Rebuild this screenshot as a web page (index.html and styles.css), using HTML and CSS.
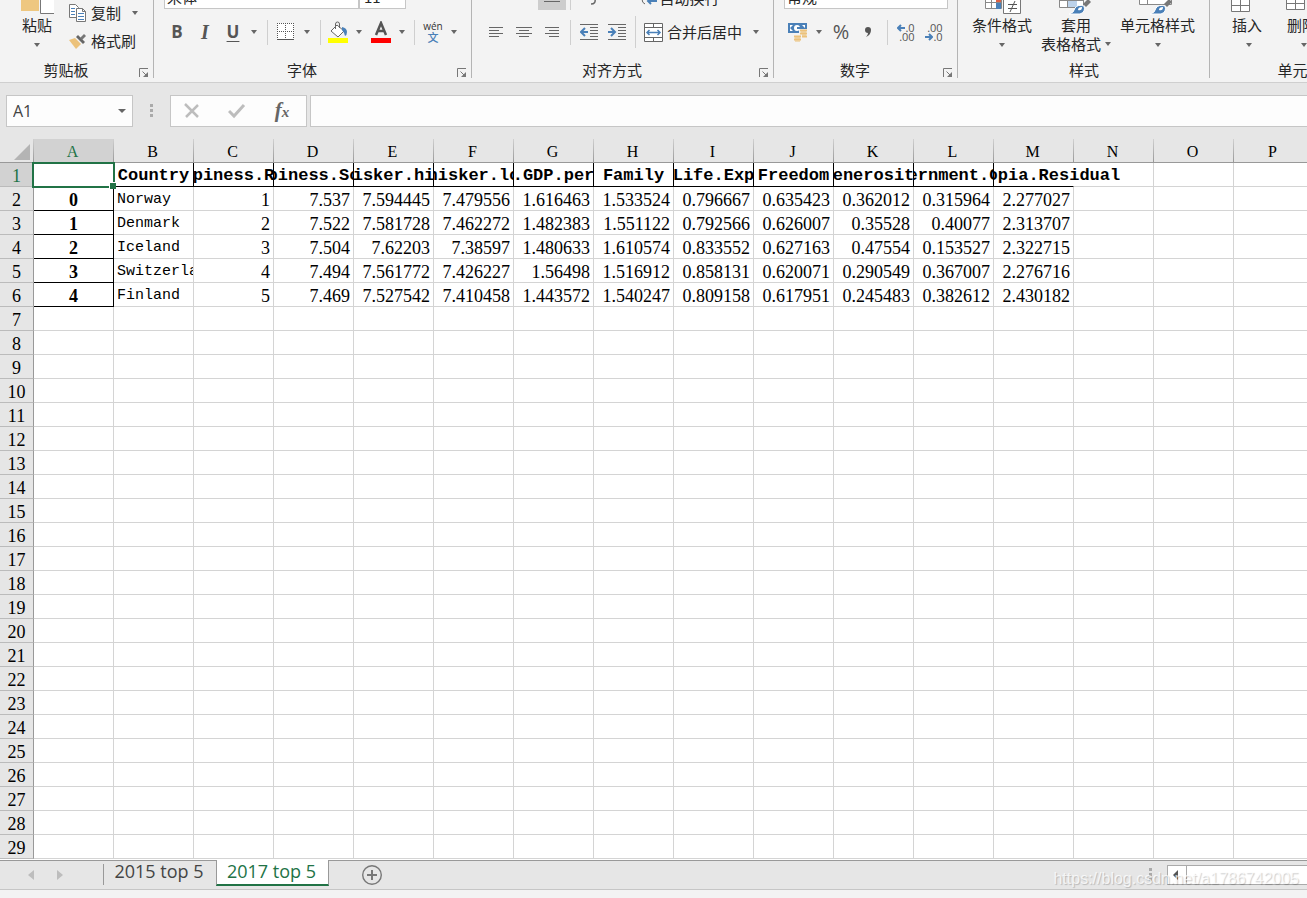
FILE: index.html
```html
<!DOCTYPE html>
<html lang="zh-CN">
<head>
<meta charset="utf-8">
<title>2017 top 5</title>
<link rel="stylesheet" href="styles.css">
</head>
<body>
<header class="ribbon">
  <section class="group clipboard">
    <div class="body row">
      <button class="big paste">
        <svg width="34" height="20" viewBox="0 0 34 20"><path d="M1 0h18v16H1z" fill="#eec780"/><path d="M20.500 0v18.500h14V0" fill="#fff" stroke="#777"/></svg>
        <span>粘贴</span><i class="caret"></i>
      </button>
      <div class="stack">
        <button class="line">
          <svg width="18" height="20" viewBox="0 0 18 20"><g fill="#fff" stroke="#777"><path d="M.5 1.500h6l3 3v10h-9z"/><path d="M7.500 5.500h6l3 3v10h-9z"/><path d="M13.500 5.500v3h3" fill="none"/></g><path d="M2 5.500h4M2 8.500h4M2 11.500h4M9 10.500h6M9 13.500h6M9 16.500h6" stroke="#4a80b8"/></svg>
          <span>复制</span><i class="caret"></i>
        </button>
        <button class="line">
          <svg width="18" height="18" viewBox="0 0 18 18"><path d="M0 8l6-2 6 6-5 5z" fill="#ecc27b"/><path d="M7 5l2-2 7 7-2 2z" fill="#666"/><path d="M11 6l4-4 2 2-4 4z" fill="#777"/></svg>
          <span>格式刷</span>
        </button>
      </div>
    </div>
    <div class="label">剪贴板</div><svg class="launch" width="10" height="10" viewBox="0 0 10 10"><path d="M.5 9V.5H9M3.500 3.500l4 4" fill="none" stroke="#777"/><path d="M9 4v5H4z" fill="#777"/></svg>
  </section>

  <section class="group font">
    <div class="body column">
      <div class="top">
        <select class="combo name" aria-label="字体"><option>宋体</option></select><select class="combo" aria-label="字号"><option>11</option></select>
      </div>
      <div class="tools">
        <button class="bold" aria-label="加粗">B</button>
        <button class="italic" aria-label="倾斜">I</button>
        <button class="under" aria-label="下划线">U</button>
        <i class="caret"></i><i class="sep"></i>
        <button aria-label="边框"><svg width="18" height="18" viewBox="0 0 18 18"><path d="M0 0h17v17H0z" fill="#fff"/><path d="M0 .5h17M0 8.500h17M.5 0v16M8.500 0v16M16.500 0v16" fill="none" stroke="#555" stroke-dasharray="1 1"/><path d="M0 16.500h17" stroke="#555"/></svg></button>
        <i class="caret"></i><i class="sep"></i>
        <button aria-label="填充颜色"><svg width="20" height="22" viewBox="0 0 20 22"><path d="M9 4l7 6-6 6-7-6z" fill="#fff" stroke="#666"/><path d="M7.500 8V3q0-2 2-2t2 2v4" fill="none" stroke="#666"/><path d="M14 6q5 1 5 5 0 3-2 4-1-4-3-6z" fill="#4a80b8"/><path d="M0 17h20v5H0z" fill="#ff0"/></svg></button>
        <i class="caret"></i>
        <button aria-label="字体颜色"><svg width="20" height="22" viewBox="0 0 20 22"><path d="M5 14L10 2l5 12M7 10h6" fill="none" stroke="#555" stroke-width="2.500"/><path d="M0 17h20v5H0z" fill="red"/></svg></button>
        <i class="caret"></i><i class="sep"></i>
        <button class="pinyin" aria-label="拼音"><small>wén</small><b>文</b></button>
        <i class="caret"></i>
      </div>
    </div>
    <div class="label">字体</div><svg class="launch" width="10" height="10" viewBox="0 0 10 10"><path d="M.5 9V.5H9M3.500 3.500l4 4" fill="none" stroke="#777"/><path d="M9 4v5H4z" fill="#777"/></svg>
  </section>

  <section class="group align">
    <div class="body column">
      <div class="top">
        <button class="pressed" aria-label="垂直居中"><svg width="18" height="18" viewBox="0 0 18 18"><path d="M1 5.500h16M4 9.500h10M1 12.500h16" stroke="#666"/></svg></button>
        <i class="sep"></i>
        <button aria-label="方向"><svg width="18" height="18" viewBox="0 0 18 18"><path d="M8 15q5 0 4-5" fill="none" stroke="#666" stroke-width="1.500"/></svg></button>
        <i></i>
        <button class="wrap"><svg width="19" height="20" viewBox="0 0 19 20"><path d="M7 16q-3-1-3-5" fill="none" stroke="#666"/><path d="M18 8v5h-8m3-3l-3 3 3 3" fill="none" stroke="#4a80b8" stroke-width="2"/></svg><span>自动换行</span></button>
      </div>
      <div class="tools">
        <button aria-label="左对齐"><svg width="16" height="12" viewBox="0 0 16 12"><path d="M1 1.500h14M1 4.500h10M1 7.500h14M1 10.500h10" stroke="#666"/></svg></button>
        <button aria-label="居中"><svg width="16" height="12" viewBox="0 0 16 12"><path d="M0 1.500h16M3 4.500h10M0 7.500h16M3 10.500h10" stroke="#666"/></svg></button>
        <button aria-label="右对齐"><svg width="16" height="12" viewBox="0 0 16 12"><path d="M1 1.500h14M5 4.500h10M1 7.500h14M5 10.500h10" stroke="#666"/></svg></button>
        <i class="sep"></i>
        <button aria-label="减少缩进"><svg width="18" height="18" viewBox="0 0 18 18"><path d="M0 1.500h18M10 4.500h8M10 7.500h8M10 10.500h8M10 13.500h8M0 16.500h18" stroke="#666"/><path d="M8 9H2m3-4L1 9l4 4" fill="none" stroke="#4a80b8" stroke-width="2"/></svg></button>
        <button aria-label="增加缩进"><svg width="18" height="18" viewBox="0 0 18 18"><path d="M0 1.500h18M10 4.500h8M10 7.500h8M10 10.500h8M10 13.500h8M0 16.500h18" stroke="#666"/><path d="M0 9h6M3 5l4 4-4 4" fill="none" stroke="#4a80b8" stroke-width="2"/></svg></button>
        <i class="sep long"></i>
        <button class="merge"><svg width="19" height="19" viewBox="0 0 19 19"><path d="M.5.500h18v18H.5zM.5 4.500h18M.5 14.500h18M9.500.5v4M9.500 14.500v4" fill="#fff" stroke="#666"/><path d="M3 9.500h13M5.500 7L3 9.500 5.500 12M13.500 7L16 9.500 13.500 12" fill="none" stroke="#4a80b8" stroke-width="1.500"/></svg><span>合并后居中</span></button>
        <i class="caret"></i>
      </div>
    </div>
    <div class="label">对齐方式</div><svg class="launch" width="10" height="10" viewBox="0 0 10 10"><path d="M.5 9V.5H9M3.500 3.500l4 4" fill="none" stroke="#777"/><path d="M9 4v5H4z" fill="#777"/></svg>
  </section>

  <section class="group number">
    <div class="body column">
      <div class="top">
        <select class="combo" aria-label="数字格式"><option>常规</option></select>
      </div>
      <div class="tools">
        <button aria-label="会计数字格式"><svg width="20" height="20" viewBox="0 0 20 20"><path d="M0 1h19v10H0z" fill="#4a80b8"/><path d="M2 3h3L2 6zM17 3h-3l3 3zM2 9h3L2 6z" fill="#fff"/><circle cx="9" cy="6" r="3" fill="#fff"/><path d="M9 5h3v2H9z" fill="#4a80b8"/><path d="M11 7h9v12H5v-7h6z" fill="#f3f3f3"/><path d="M12 8.500h7M12 11.500h7M14 14.500h5M6 14.500h7M6 17.500h7" stroke="#ecc27b" stroke-width="2"/><path d="M13 10h5M14 13h4M7 16h5M7 19h5" stroke="#ecc27b"/></svg></button>
        <i class="caret"></i>
        <button class="percent" aria-label="百分比">%</button>
        <button aria-label="千位分隔"><svg width="8" height="12" viewBox="0 0 8 12"><path d="M1 4a3 3 0 1 1 6 0q0 5-5 7 2-2 2-4-3 0-3-3z" fill="#555"/></svg></button>
        <i class="sep"></i>
        <button class="dec" aria-label="增加小数位"><span><svg width="8" height="8" viewBox="0 0 8 8"><path d="M8 4H2m2-3L1 4l3 3" fill="none" stroke="#4a80b8" stroke-width="2"/></svg>.0</span><span>.00</span></button>
        <button class="dec" aria-label="减少小数位"><span>.00</span><span><svg width="8" height="8" viewBox="0 0 8 8"><path d="M0 4h6M4 1l3 3-3 3" fill="none" stroke="#4a80b8" stroke-width="2"/></svg>.0</span></button>
      </div>
    </div>
    <div class="label">数字</div><svg class="launch" width="10" height="10" viewBox="0 0 10 10"><path d="M.5 9V.5H9M3.500 3.500l4 4" fill="none" stroke="#777"/><path d="M9 4v5H4z" fill="#777"/></svg>
  </section>

  <section class="group styles">
    <div class="body row">
      <button class="big">
        <svg width="38" height="20" viewBox="0 0 38 20"><path d="M2.500 0v13.500h16V0M2.500 7.500h16M8.500 0v13" fill="#fff" stroke="#888"/><path d="M13 0h5v7h-5z" fill="#dc6046"/><path d="M13 8h5v6h-5z" fill="#4a80b8"/><path d="M20.500 0v18.500h17V0" fill="#fff" stroke="#777"/><path d="M25 9.500h9M25 13.500h9M32 6l-5 11" stroke="#555"/></svg>
        <span>条件格式</span><i class="caret"></i>
      </button>
      <button class="big">
        <svg width="34" height="20" viewBox="0 0 34 20"><path d="M.5 0v12.500h24V0M.5 5.500h24M8.500 0v12" fill="#fff" stroke="#888"/><path d="M9 6h9v6H9z" fill="#bcd2ea"/><path d="M10 19q5-1 6-6 3-4 9-2 2 6-4 8z" fill="#4a80b8" stroke="#fff"/><path d="M24 9l5-5 3 3-5 5z" fill="#777"/><path d="M19 15q0-3 4-3 0 4-4 3z" fill="#fff"/></svg>
        <span>套用</span><span class="second">表格格式<i class="caret"></i></span>
      </button>
      <button class="big">
        <svg width="38" height="20" viewBox="0 0 38 20"><path d="M.5 0v9.500h32V0M8.500 0v9" fill="#fff" stroke="#888"/><path d="M11 19q5-1 6-6 3-4 9-2 2 6-4 8z" fill="#4a80b8" stroke="#fff"/><path d="M25 9l5-5 3 3-5 5z" fill="#777"/><path d="M20 15q0-3 4-3 0 4-4 3z" fill="#fff"/></svg>
        <span>单元格样式</span><i class="caret"></i>
      </button>
    </div>
    <div class="label">样式</div>
  </section>

  <section class="group cells">
    <div class="body row">
      <button class="big"><svg width="32" height="20" viewBox="0 0 32 20"><path d="M.5 0v16.500h18V0M.5 10.500h18M9.500 0v16" fill="#fff" stroke="#777"/></svg><span>插入</span><i class="caret"></i></button>
      <button class="big"><svg width="32" height="20" viewBox="0 0 32 20"><path d="M.5 0v14.500h18V0M.5 8.500h18M9.500 0v14" fill="#fff" stroke="#777"/></svg><span>删除</span><i class="caret"></i></button>
    </div>
    <div class="label">单元格</div>
  </section>
</header>

<div class="formula-bar">
  <div class="name-box"><input type="text" value="A1" aria-label="名称框"><i class="caret"></i></div>
  <i class="grip"></i>
  <div class="actions">
    <button aria-label="取消"><svg width="16" height="16" viewBox="0 0 16 16"><path d="M1 1l13 13M14 2L2 14" stroke="#bdbdbd" stroke-width="2.500" fill="none"/></svg></button>
    <button aria-label="输入"><svg width="18" height="16" viewBox="0 0 18 16"><path d="M1 8l5 5L16 2" stroke="#bdbdbd" stroke-width="3" fill="none"/></svg></button>
    <button class="fx" aria-label="插入函数"><i>f</i><small>x</small></button>
  </div>
  <input class="formula" type="text" aria-label="编辑栏">
</div>

<main class="sheet">
  <table>
    <thead><tr id="letters"><th class="corner" aria-label="全选"><svg width="16" height="16" viewBox="0 0 16 16"><path d="M16 0v16H0z" fill="#b4b4b4"/></svg></th></tr></thead>
    <tbody id="rows"></tbody>
  </table>
</main>

<footer class="tabs">
  <button class="nav" aria-label="上一张"><svg width="6" height="10" viewBox="0 0 6 10"><path d="M6 0v10L0 5z" fill="#bdbdbd"/></svg></button>
  <button class="nav" aria-label="下一张"><svg width="6" height="10" viewBox="0 0 6 10"><path d="M0 0v10l6-5z" fill="#bdbdbd"/></svg></button>
  <i class="divider"></i>
  <button class="tab">2015 top 5</button>
  <button class="tab active">2017 top 5</button>
  <button class="add" aria-label="新工作表"><svg width="20" height="20" viewBox="0 0 20 20"><circle cx="10" cy="10" r="9.300" fill="none" stroke="#777" stroke-width="1.400"/><path d="M10 5v10M5 10h10" stroke="#777" stroke-width="2"/></svg></button>
  <i class="grip"></i>
  <div class="scroll"><button aria-label="向左滚动"><svg width="5" height="10" viewBox="0 0 5 10"><path d="M5 0v10L0 5z" fill="#555"/></svg></button></div>
  <span class="watermark">https://blog.csdn.net/a1786742005</span>
</footer>
<div class="status"></div>
<script src="sheet.js"></script>
</body>
</html>
```
FILE: styles.css
```css
* { box-sizing: border-box; }
body {
  margin: 0;
  height: 100vh;
  display: flex;
  flex-direction: column;
  overflow: hidden;
  background: #e6e6e6;
  color: #262626;
  font: 15px/20px "Open Sans", "Noto Sans CJK SC", sans-serif;
}
button, input, select { font: inherit; color: inherit; }
button {
  display: flex;
  align-items: center;
  justify-content: center;
  padding: 0;
  border: 0;
  background: none;
  white-space: nowrap;
}
svg { display: block; flex: none; }
.caret {
  flex: none;
  width: 0;
  height: 0;
  border: 3px solid transparent;
  border-top: 4px solid #666;
  border-bottom: 0;
}

/* Ribbon */
.ribbon {
  flex: none;
  display: flex;
  height: 83px;
  overflow: hidden;
  background: #f3f3f3;
  border-bottom: 1px solid #cfcfcf;
  font-family: "Noto Sans CJK SC", sans-serif;
}
.group {
  position: relative;
  flex: none;
  background: linear-gradient(#b4b4b4, #b4b4b4) right top / 1px 78px no-repeat;
}
.clipboard { width: 154px; }
.font { width: 318px; }
.align { width: 302px; }
.number { width: 184px; }
.styles { width: 252px; }
.cells { width: 180px; background: none; }
.body { display: flex; height: 60px; overflow: hidden; }
.row { align-items: flex-end; }
.column { flex-direction: column; justify-content: flex-end; padding-bottom: 14px; }
.label { text-align: center; }
.clipboard .label, .font .label, .align .label, .number .label { padding-right: 22px; }
.launch { position: absolute; right: 5px; bottom: 4px; }

.big { flex-direction: column; justify-content: flex-start; height: 65px; }
.big > .caret { margin-top: 8px; }
.second { display: flex; align-items: center; gap: 4px; margin-right: -10px; line-height: 18px; }
.clipboard .body { padding-left: 20px; gap: 15px; }
.paste { width: 34px; }
.stack { padding-bottom: 5px; }
.line { height: 28px; gap: 4px; }
.line .caret { margin-left: 7px; }
.styles .body { padding-left: 14px; gap: 9px; }
.styles .big:nth-child(2) { margin-right: 10px; align-items: flex-start; }
.styles .big:nth-child(2) > * { margin-left: 0; }
.styles .big:nth-child(2) > svg { margin-left: 18px; }
.styles .big:nth-child(2) > span:first-of-type { margin-left: 20px; }
.cells .body { padding-left: 21px; gap: 23px; }
.cells .caret { margin-left: 4px; }

.top { display: flex; flex: none; height: 24px; margin-bottom: 9px; }
.combo {
  appearance: none;
  width: 47px;
  height: 24px;
  padding: 0 4px;
  border: 1px solid #c6c6c6;
  background: #fff;
  line-height: 16px;
}
.combo.name { width: 195px; padding: 0 2px; }
.font .top { padding-left: 10px; }
.align .top { display: grid; grid-template-columns: 28px 8px 36px 26px 86px; padding-left: 66px; }
.pressed { background: #cdcdcd; }
.wrap { gap: 2px; line-height: 16px; }
.number .top { padding-left: 10px; }
.number .combo { width: 164px; padding: 0 2px; }

.tools {
  display: grid;
  grid-template-rows: 28px;
  flex: none;
  height: 28px;
  align-items: center;
  justify-items: center;
  color: #555;
}
.font .tools { padding-left: 9px; grid-template-columns: 28px 28px 28px 14px 13px 23px 20px 6px 30px 12px 32px 10px 14px 24px 18px; }
.align .tools { padding-left: 10px; grid-template-columns: 28px 28px 28px 8px 30px 26px 10px 106px 20px; }
.number .tools { padding-left: 9px; grid-template-columns: 29px 14px 30px 24px 14px 24px 32px; }
.sep { width: 1px; height: 25px; background: #cfcfcf; }
.top .sep { justify-self: center; }
.sep.long { height: 32px; }
.bold, .under, .italic { font: bold 17px/20px "Open Sans", sans-serif; }
.italic { font-family: "Liberation Serif", serif; font-style: italic; font-size: 20px; }
.under { text-decoration: underline; text-underline-offset: 3px; text-decoration-thickness: 1px; }
.pinyin { flex-direction: column; }
.pinyin small { font: 10px/9px "Open Sans", sans-serif; color: #333; }
.pinyin b { font-weight: 500; font-size: 11px; line-height: 12px; color: #4a80b8; }
.merge { gap: 4px; color: #262626; }
.percent { font: 20px/24px "Open Sans", sans-serif; }
.dec { flex-direction: column; align-items: flex-end; font: 11px/9px "Open Sans", sans-serif; }
.dec span { display: flex; align-items: center; }

/* Name box and formula bar */
.formula-bar { flex: none; display: flex; height: 56px; padding: 12px 0 12px 6px; }
.name-box, .actions, .formula { border: 1px solid #c6c6c6; background: #fdfdfd; }
.name-box { display: flex; align-items: center; width: 127px; padding-right: 6px; }
.name-box input { flex: 1; min-width: 0; border: 0; padding: 0 6px; background: none; color: #444; font-size: 16px; }
.name-box .caret { border-width: 4px 4px 0; }
.grip {
  width: 3px;
  height: 13px;
  background: repeating-linear-gradient(#aaa 0 3px, transparent 3px 5px);
}
.formula-bar .grip { margin: 9px 17px 0 17px; }
.actions { display: grid; grid-template-columns: repeat(3, 45px); width: 137px; margin-right: 3px; }
.actions button { padding-right: 3px; }
.fx { align-items: baseline; font: bold 21px/28px "Liberation Serif", serif; color: #666; }
.fx small { font-size: 15px; font-style: italic; }
.formula { flex: 1; min-width: 0; border-right: 0; }

/* Grid */
.sheet {
  flex: 1;
  min-height: 0;
  overflow: hidden;
  background: #fff;
  color: #000;
  font: 18px/20px "Liberation Serif", serif;
}
table { table-layout: fixed; width: 0; border-collapse: separate; border-spacing: 0; }
th, td { width: 80px; height: 24px; padding: 3px 3px 0; border: 0 solid #d4d4d4; border-width: 0 1px 1px 0; white-space: nowrap; }
th { font-weight: normal; }
.sheet thead th {
  height: 24px;
  padding-left: 0;
  font-size: 16px;
  border-right: 0;
  border-bottom-color: #999;
  background: linear-gradient(#d0d0d0, #999) right top / 1px 100% no-repeat #e6e6e6;
}
thead .corner, tbody th { width: 34px; padding: 3px 0 0; }
.sheet thead .corner svg { margin: 0 0 0 14px; }
tbody th { background: #e6e6e6; border-color: #bbb; border-right-color: #999; }
.sheet thead .on, tbody .on { background-color: #d2d2d2; color: #217346; }
td { overflow: hidden; }
.num { text-align: right; }
.text { font: 15px/20px "Liberation Mono", monospace; }
.index { border-color: #000; text-align: center; font-weight: bold; }
.head { padding: 3px 0 0; border-color: #000; font: bold 17px/20px "Liberation Mono", monospace; }
.head div { display: flex; justify-content: center; }
.head.last { overflow: visible; border-right-color: transparent; clip-path: inset(0 -60px 0 0); }
.current { position: relative; overflow: visible; }
.current::before { content: ""; position: absolute; inset: -1px -2px -2px -2px; border: 2px solid #217346; }
.current::after { content: ""; position: absolute; right: -3px; bottom: -3px; width: 6px; height: 6px; background: #217346; border: 1px solid #fff; border-width: 1px 0 0 1px; }

/* Sheet tabs */
.tabs {
  position: relative;
  flex: none;
  display: flex;
  align-items: flex-start;
  height: 30px;
  border-top: 1px solid #999;
  border-bottom: 1px solid #c6c6c6;
  padding-left: 16px;
}
.nav { width: 29px; height: 27px; }
.divider { width: 1px; height: 21px; margin: 3px 0 0 29px; background: #999; }
.tab { width: 112px; height: 26px; padding: 0 2px 7px 0; font: 18px/20px "Open Sans", sans-serif; color: #444; }
.tab.active {
  width: 113px;
  margin-top: -1px;
  background: #fff;
  border: 1px solid #999;
  border-width: 0 1px 2px;
  border-bottom-color: #217346;
  color: #217346;
  padding-bottom: 3px;
}
.add { margin: 4px auto 0 33px; }
.tabs > .grip { margin: 7px 15px 0 0; }
.scroll { width: 140px; height: 20px; margin-top: 4px; border: 1px solid #aaa; border-right: 0; background: #fff; }
.scroll button { width: 19px; height: 18px; padding-right: 3px; border-right: 1px solid #aaa; }
.watermark {
  position: absolute;
  right: 8px;
  top: 8px;
  font: 16px/20px "Liberation Sans", sans-serif;
  color: rgba(255, 255, 255, 0.75);
  text-shadow: 1px 1px 1px rgba(0, 0, 0, 0.2);
}
.status { flex: none; height: 8px; background: #f3f3f3; }
```
FILE: sheet.js
```js
const letters = 'ABCDEFGHIJKLMNOP'.split('');
const heads = ['Country', 'Happiness.Rank', 'Happiness.Score', 'Whisker.high', 'Whisker.low',
  'Economy..GDP.per.Capita.', 'Family', 'Health..Life.Expectancy.', 'Freedom', 'Generosity',
  'Trust..Government.Corruption.', 'Dystopia.Residual'];
const data = [
  ['0', 'Norway', '1', '7.537', '7.594445', '7.479556', '1.616463', '1.533524', '0.796667', '0.635423', '0.362012', '0.315964', '2.277027'],
  ['1', 'Denmark', '2', '7.522', '7.581728', '7.462272', '1.482383', '1.551122', '0.792566', '0.626007', '0.35528', '0.40077', '2.313707'],
  ['2', 'Iceland', '3', '7.504', '7.62203', '7.38597', '1.480633', '1.610574', '0.833552', '0.627163', '0.47554', '0.153527', '2.322715'],
  ['3', 'Switzerland', '4', '7.494', '7.561772', '7.426227', '1.56498', '1.516912', '0.858131', '0.620071', '0.290549', '0.367007', '2.276716'],
  ['4', 'Finland', '5', '7.469', '7.527542', '7.410458', '1.443572', '1.540247', '0.809158', '0.617951', '0.245483', '0.382612', '2.430182']
];

const letterRow = document.getElementById('letters');
letters.forEach((letter, i) => {
  const th = document.createElement('th');
  th.scope = 'col';
  th.textContent = letter;
  if (i === 0) th.className = 'on';
  letterRow.append(th);
});

const body = document.getElementById('rows');
for (let r = 1; r <= 29; r++) {
  const tr = body.insertRow();
  const th = document.createElement('th');
  th.scope = 'row';
  th.textContent = r;
  if (r === 1) th.className = 'on';
  tr.append(th);
  letters.forEach((letter, c) => {
    const td = tr.insertCell();
    if (r === 1 && c === 0) {
      td.className = 'current';
    } else if (r === 1 && heads[c - 1]) {
      td.className = c === heads.length ? 'head last' : 'head';
      const div = document.createElement('div');
      div.textContent = heads[c - 1];
      td.append(div);
    } else if (data[r - 2] && data[r - 2][c]) {
      td.className = c === 0 ? 'index' : c === 1 ? 'text' : 'num';
      td.textContent = data[r - 2][c];
    }
  });
}
```
